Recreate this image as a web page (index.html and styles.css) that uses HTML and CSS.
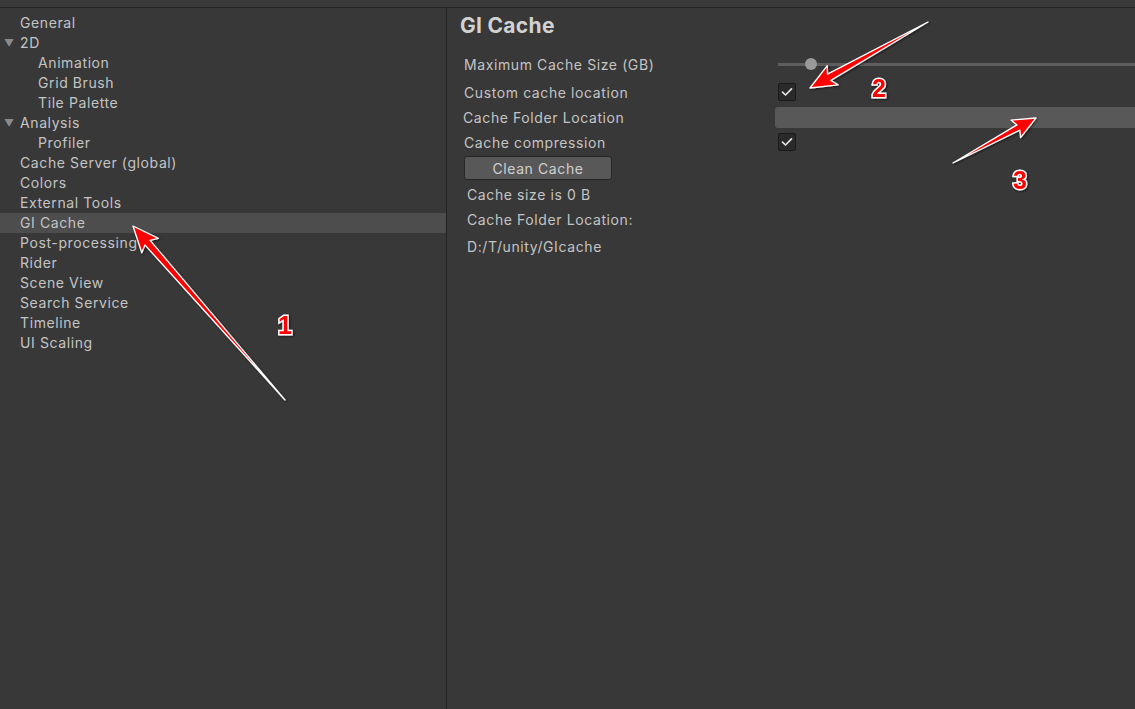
FILE: index.html
```html
<!DOCTYPE html>
<html>
<head>
<meta charset="utf-8">
<link rel="stylesheet" href="styles.css">
</head>
<body>
<div class="topbar"></div>
<div class="main">
  <div class="sidebar">
    <div class="row l0">General</div>
    <div class="row l0"><span class="tri">&#9660;</span>2D</div>
    <div class="row l1">Animation</div>
    <div class="row l1">Grid Brush</div>
    <div class="row l1">Tile Palette</div>
    <div class="row l0"><span class="tri">&#9660;</span>Analysis</div>
    <div class="row l1">Profiler</div>
    <div class="row l0">Cache Server (global)</div>
    <div class="row l0">Colors</div>
    <div class="row l0">External Tools</div>
    <div class="row l0 sel">GI Cache</div>
    <div class="row l0">Post-processing</div>
    <div class="row l0">Rider</div>
    <div class="row l0">Scene View</div>
    <div class="row l0">Search Service</div>
    <div class="row l0">Timeline</div>
    <div class="row l0">UI Scaling</div>
  </div>
  <div class="content">
    <h1 class="title">GI Cache</h1>
    <div class="field f1">
      <div class="label">Maximum Cache Size (GB)</div>
      <div class="ctrl"><div class="slider"><div class="thumb"></div></div></div>
    </div>
    <div class="field f2">
      <div class="label">Custom cache location</div>
      <div class="ctrl"><div class="check"><svg width="12" height="10" viewBox="0 0 12 10"><path d="M1.5 5.2 L4.5 8 L10.5 1.8" fill="none" stroke="#e4e4e4" stroke-width="1.7" stroke-linecap="round" stroke-linejoin="round"/></svg></div></div>
    </div>
    <div class="field f3">
      <div class="label shift">Cache Folder Location</div>
      <div class="ctrl"><div class="textbox"></div></div>
    </div>
    <div class="field f4">
      <div class="label">Cache compression</div>
      <div class="ctrl"><div class="check"><svg width="12" height="10" viewBox="0 0 12 10"><path d="M1.5 5.2 L4.5 8 L10.5 1.8" fill="none" stroke="#e4e4e4" stroke-width="1.7" stroke-linecap="round" stroke-linejoin="round"/></svg></div></div>
    </div>
    <button class="btn">Clean Cache</button>
    <div class="info i1">Cache size is 0 B</div>
    <div class="info i2">Cache Folder Location:</div>
    <div class="info i3">D:/T/unity/GIcache</div>
  </div>
</div>
<svg class="overlay" width="1135" height="709" viewBox="0 0 1135 709">
  <defs>
    <filter id="sh" x="-20%" y="-20%" width="140%" height="140%">
      <feDropShadow dx="1" dy="1" stdDeviation="1.2" flood-color="#000" flood-opacity="0.6"/>
    </filter>
  </defs>
  <g filter="url(#sh)" fill="#ff0000" stroke="#ffffff" stroke-width="1.3" stroke-linejoin="round">
    <polygon points="285,400 150.1,240.3 158.4,238.4 133,226 141.8,252.8 144.9,244.9"/>
    <polygon points="928,22 830.9,80.4 838.1,84.9 810,88 827.3,65.7 827.5,74.2"/>
    <polygon points="953,163 1019.8,130.1 1020.6,137.7 1036,118 1011,120.1 1017,124.9"/>
  </g>
  <g class="num" filter="url(#sh)">
    <text x="285" y="334">1</text>
    <text x="879" y="97">2</text>
    <text x="1020" y="189">3</text>
  </g>
</svg>
</body>
</html>
```
FILE: styles.css
```css
html, body {
  margin: 0;
  padding: 0;
  width: 1135px;
  height: 709px;
  overflow: hidden;
  background: #383838;
  font-family: Inter, "Noto Sans", sans-serif;
  font-size: 14px;
  letter-spacing: 0.6px;
  color: #c4c4c4;
}
.topbar {
  height: 7px;
  background: #3a3a3a;
  border-bottom: 1px solid #232323;
}
.main {
  display: flex;
  height: 701px;
}
.sidebar {
  width: 446px;
  border-right: 1px solid #232323;
  padding-top: 5px;
  box-sizing: content-box;
}
.row {
  height: 20px;
  line-height: 20px;
  position: relative;
  white-space: nowrap;
}
.l0 { padding-left: 20px; }
.l1 { padding-left: 38px; }
.sel { background: #4d4d4d; }
.tri {
  position: absolute;
  left: 4px;
  top: 0;
  font-size: 10px;
  letter-spacing: 0;
  color: #8a8a8a;
}
.content {
  flex: 1;
  padding-left: 13px;
  display: flex;
  flex-direction: column;
  align-items: flex-start;
}
.title {
  margin: 3px 0 0 0;
  font-size: 21px;
  font-weight: 700;
  letter-spacing: 0.3px;
  color: #d2d2d2;
  line-height: 29px;
  height: 29px;
}
.field {
  display: flex;
  align-items: center;
  width: 100%;
  padding-left: 4px;
  box-sizing: border-box;
}
.f1 { margin-top: 14px; height: 20px; }
.f2 { margin-top: 8px; height: 20px; }
.f3 { margin-top: 5px; height: 21px; }
.f4 { margin-top: 4px; height: 20px; }
.label {
  width: 314px;
  flex: none;
  white-space: nowrap;
}
.label.shift { margin-left: -1px; width: 315px; }
.ctrl {
  flex: 1;
  display: flex;
  align-items: center;
  height: 100%;
}
.slider {
  position: relative;
  width: 100%;
  height: 3px;
  background: #5e5e5e;
}
.thumb {
  position: absolute;
  left: 27px;
  top: -5px;
  width: 12px;
  height: 12px;
  border-radius: 50%;
  background: #999999;
}
.check {
  width: 16px;
  height: 16px;
  border: 1px solid #1a1a1a;
  border-radius: 2px;
  background: #2a2a2a;
  display: flex;
  align-items: center;
  justify-content: center;
}
.textbox {
  margin-left: -3px;
  width: calc(100% + 3px);
  height: 21px;
  background: #585858;
  border-radius: 3px 0 0 3px;
}
.btn {
  margin: 4px 0 0 4px;
  width: 148px;
  height: 24px;
  background: #585858;
  border: 1px solid #262626;
  border-radius: 3px;
  color: #d0d0d0;
  font-family: Inter, "Noto Sans", sans-serif;
  font-size: 14px;
  letter-spacing: 0.6px;
  padding: 0;
}
.info {
  padding-left: 7px;
  height: 25px;
  line-height: 25px;
  white-space: nowrap;
}
.i1 { margin-top: 2px; line-height: 26px; height: 25px; }
.i3 { margin-top: 2px; }
.overlay {
  position: absolute;
  left: 0;
  top: 0;
  pointer-events: none;
}
.num text {
  font-family: "Liberation Sans", Arial, sans-serif;
  font-weight: 700;
  font-size: 25px;
  letter-spacing: 0;
  fill: #ff0000;
  stroke: #ffffff;
  stroke-width: 3px;
  paint-order: stroke;
  text-anchor: middle;
}
```
